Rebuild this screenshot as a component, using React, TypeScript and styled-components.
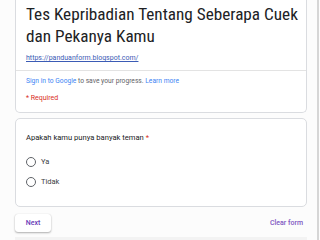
import React from "react";
import styled, {createGlobalStyle} from "styled-components";

const GlobalStyle = createGlobalStyle`
  html, body {
    margin: 0;
    padding: 0;
    background: #fcfcfc;
    font-family: Roboto, "Liberation Sans", Arial, sans-serif;
  }
`

const options = ["Ya", "Tidak"]

export default function App() {
    return (
        <>
            <GlobalStyle/>
            <Page>
                <Column>
                    <HeaderCard>
                        <HeaderBody>
                            <Title>Tes Kepribadian Tentang Seberapa Cuek dan Pekanya Kamu</Title>
                            <SiteLink href="#">https://panduanform.blogspot.com/</SiteLink>
                        </HeaderBody>
                        <HeaderFoot>
                            <Note>
                                <BlueText>Sign in to Google</BlueText> to save your progress. <BlueText>Learn more</BlueText>
                            </Note>
                            <Required>* Required</Required>
                        </HeaderFoot>
                    </HeaderCard>
                    <QuestionCard>
                        <Question>Apakah kamu punya banyak teman <Star>*</Star></Question>
                        <Options>
                            {options.map(o => (
                                <Option key={o}>
                                    <Radio/>
                                    <OptionLabel>{o}</OptionLabel>
                                </Option>
                            ))}
                        </Options>
                    </QuestionCard>
                    <Actions>
                        <NextButton>Next</NextButton>
                        <ClearButton>Clear form</ClearButton>
                    </Actions>
                    <FooterStrip/>
                </Column>
            </Page>
        </>
    )
}

const Page = styled.div`
  width: 317px;
  height: 240px;
  overflow: hidden;
  border-right: 2px solid #d6d6d6;
`

const Column = styled.div`
  width: 292px;
  margin-left: 15px;
  display: flex;
  flex-direction: column;
`

const Card = styled.div`
  background: #fff;
  border: 1px solid #dadce0;
  border-radius: 5px;
`

const HeaderCard = styled(Card)`
  border-top: none;
  border-top-left-radius: 0;
  border-top-right-radius: 0;
`

const HeaderBody = styled.div`
  padding: 3px 2px 6px 10px;
  border-bottom: 1px solid #e3e3e3;
`

const Title = styled.div`
  font-size: 17.2px;
  font-stretch: 75%;
  line-height: 22px;
  color: #202124;
`

const SiteLink = styled.a`
  display: block;
  margin-top: 5px;
  font-size: 7px;
  line-height: 12px;
  color: #3b5bb5;
  text-decoration: underline;
`

const HeaderFoot = styled.div`
  padding: 5px 10px 8px;
  display: flex;
  flex-direction: column;
  gap: 6px;
`

const Note = styled.div`
  font-size: 6.7px;
  line-height: 11px;
  color: #5f6368;
`

const BlueText = styled.span`
  color: #4285f4;
`

const Required = styled.div`
  font-size: 7px;
  line-height: 11px;
  color: #d93025;
`

const QuestionCard = styled(Card)`
  margin-top: 5px;
  padding: 13px 10px 19px;
`

const Question = styled.div`
  font-size: 7.6px;
  line-height: 12px;
  color: #202124;
`

const Star = styled.span`
  color: #d93025;
`

const Options = styled.div`
  margin-top: 12px;
  display: flex;
  flex-direction: column;
  gap: 9px;
`

const Option = styled.div`
  display: flex;
  align-items: center;
  gap: 5px;
`

const Radio = styled.span`
  width: 8px;
  height: 8px;
  border: 1.5px solid #5f6368;
  border-radius: 50%;
`

const OptionLabel = styled.span`
  font-size: 7.5px;
  line-height: 11px;
  color: #3c4043;
`

const Actions = styled.div`
  margin-top: 7px;
  display: flex;
  justify-content: space-between;
  align-items: center;
`

const NextButton = styled.button`
  width: 36px;
  height: 18px;
  padding: 0;
  border: none;
  border-radius: 3px;
  background: #fff;
  box-shadow: 0 1px 2px rgba(0, 0, 0, 0.3), 0 0 1px rgba(0, 0, 0, 0.15);
  font-family: inherit;
  font-size: 7px;
  font-weight: 500;
  color: #673ab7;
`

const ClearButton = styled.button`
  padding: 0 4px 0 0;
  border: none;
  background: none;
  font-family: inherit;
  font-size: 7px;
  font-weight: 500;
  color: #7e57c2;
`

const FooterStrip = styled.div`
  margin-top: 5px;
  height: 10px;
  background: #f3f3f3;
`
